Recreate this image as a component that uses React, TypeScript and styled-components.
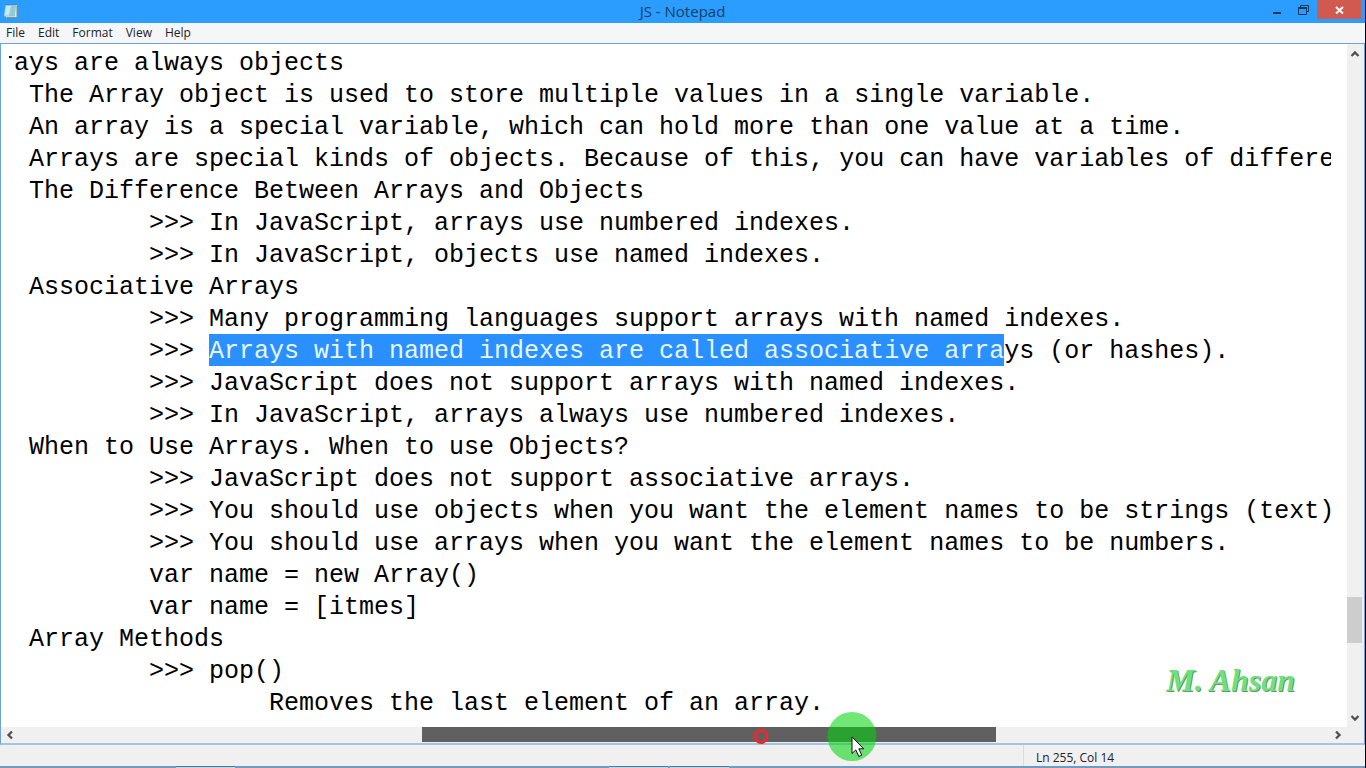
import React from "react";
import styled, { createGlobalStyle } from "styled-components";

const UI_FONT = '"Open Sans", "Noto Sans", sans-serif';

const GlobalStyle = createGlobalStyle`
  * { box-sizing: border-box; }
  body { margin: 0; background: #000; font-family: ${UI_FONT}; }
`;

const Window = styled.div`
  position: relative;
  display: grid;
  grid-template-rows: 23px 20px minmax(0, 1fr) 21px 2px;
  height: 100vh;
  margin-right: 1px;
  background: #f0f0f0;
  overflow: hidden;
`;

const TitleBar = styled.header`
  display: grid;
  grid-template-columns: 1fr auto 1fr;
  align-items: start;
  background: #2a9dff;
`;

const AppIcon = styled.svg`
  display: block;
  margin: 3px 0 0 3px;
`;

const Title = styled.h1`
  margin: 0;
  font-size: 15px;
  font-weight: 400;
  line-height: 23px;
  color: #143d66;
`;

const WindowButtons = styled.div`
  display: flex;
  justify-content: flex-end;
  padding-right: 4px;
`;

const WindowButton = styled.button<{ $close?: boolean }>`
  display: flex;
  align-items: center;
  justify-content: center;
  width: ${(p) => (p.$close ? 44 : 26)}px;
  height: 19px;
  padding: 0;
  border: 0;
  background: ${(p) => (p.$close ? "#d05a50" : "transparent")};
`;

const MenuBar = styled.nav`
  display: flex;
  gap: 1px;
  background: #f5f6f8;
`;

const MenuItem = styled.button`
  padding: 0 6px;
  border: 0;
  background: transparent;
  font-family: ${UI_FONT};
  font-size: 12px;
  line-height: 20px;
  color: #222;
`;

const Client = styled.main`
  display: grid;
  grid-template-columns: minmax(0, 1fr) 15px;
  grid-template-rows: minmax(0, 1fr) 15px;
  padding: 0 2px 1px 0;
  border: 1px solid #6ea3da;
  border-bottom: 2px solid #a5c3e4;
  background: #f0f0f0;
`;

const Page = styled.div`
  padding: 2px 16px 0 8px;
  background: #fff;
  overflow: hidden;
`;

const Viewport = styled.div`
  height: 100%;
  overflow: hidden;
`;

const Editor = styled.div`
  margin-left: -10px;
  outline: none;
  font-family: "Liberation Mono", monospace;
  font-size: 25px;
  line-height: 36px;
  white-space: pre;
  color: #000;
`;

const Line = styled.div<{ $level: number }>`
  height: 32px;
  padding-left: ${(p) => (p.$level === 0 ? 0 : p.$level * 120 - 90)}px;
`;

const Selection = styled.mark`
  display: inline-block;
  height: 32px;
  vertical-align: top;
  background: #2a90ff;
  color: #e8f6ff;
`;

const ScrollBar = styled.div<{ $vertical?: boolean }>`
  display: flex;
  flex-direction: ${(p) => (p.$vertical ? "column" : "row")};
  background: #f0f0f0;
`;

const ScrollButton = styled.button`
  display: flex;
  flex: none;
  align-items: center;
  justify-content: center;
  width: 18px;
  height: 15px;
  padding: 0;
  border: 0;
  background: transparent;
`;

const VerticalButton = styled(ScrollButton)`
  width: 15px;
  height: 19px;
`;

const Track = styled.div<{ $before: number; $thumb: number; $after: number; $vertical?: boolean }>`
  display: grid;
  flex: 1;
  ${(p) => (p.$vertical ? "grid-template-rows" : "grid-template-columns")}:
    ${(p) => `${p.$before}fr ${p.$thumb}fr ${p.$after}fr`};
`;

const Thumb = styled.div<{ $vertical?: boolean }>`
  ${(p) => (p.$vertical ? "grid-row: 2" : "grid-column: 2")};
  background: ${(p) => (p.$vertical ? "#cdcdcd" : "#606060")};
`;

const StatusBar = styled.footer`
  display: grid;
  grid-template-columns: minmax(0, 1fr) 342px;
  background: #f0f0f0;
`;

const StatusCell = styled.div`
  grid-column: 2;
  padding: 1px 0 0 12px;
  border-left: 1px solid #dcdcdc;
  font-size: 12px;
  line-height: 23px;
  color: #222;
`;

const TaskbarEdge = styled.div`
  display: grid;
  grid-template-columns: 176fr 59fr 374fr 59fr 2fr 59fr 636fr;
  background: #739bc2;
`;

const TaskButtonEdge = styled.div<{ $column: number }>`
  grid-column: ${(p) => p.$column};
  border-top: 1px solid #54789c;
  background: #bdd3e6;
`;

const Signature = styled.div`
  position: absolute;
  right: 70px;
  bottom: 72px;
  font-family: "Liberation Serif", serif;
  font-size: 32px;
  font-style: italic;
  font-weight: 700;
  line-height: 32px;
  color: #6ee07c;
  text-shadow: 1px 1px 0 #5f9a68;
`;

const ClickMarks = styled.svg`
  position: absolute;
  left: 750px;
  bottom: 4px;
  pointer-events: none;
`;

type Direction = "up" | "down" | "left" | "right";

const chevrons: Record<Direction, string> = {
  up: "M1.5 7 5 3.5 8.5 7",
  down: "M1.5 3 5 6.5 8.5 3",
  left: "M7 1.5 3.5 5 7 8.5",
  right: "M3 1.5 6.5 5 3 8.5",
};

const Chevron = ({ to }: { to: Direction }) => (
  <svg width="10" height="10" viewBox="0 0 10 10" aria-hidden="true">
    <path d={chevrons[to]} fill="none" stroke="#505050" strokeWidth="2.3" />
  </svg>
);

type TextLine = [level: number, text: string, selected?: string, rest?: string];

const lines: TextLine[] = [
  [0, "rays are always objects"],
  [1, "The Array object is used to store multiple values in a single variable."],
  [1, "An array is a special variable, which can hold more than one value at a time."],
  [1, "Arrays are special kinds of objects. Because of this, you can have variables of differe"],
  [1, "The Difference Between Arrays and Objects"],
  [2, ">>> In JavaScript, arrays use numbered indexes."],
  [2, ">>> In JavaScript, objects use named indexes."],
  [1, "Associative Arrays"],
  [2, ">>> Many programming languages support arrays with named indexes."],
  [2, ">>> ", "Arrays with named indexes are called associative arra", "ys (or hashes)."],
  [2, ">>> JavaScript does not support arrays with named indexes."],
  [2, ">>> In JavaScript, arrays always use numbered indexes."],
  [1, "When to Use Arrays. When to use Objects?"],
  [2, ">>> JavaScript does not support associative arrays."],
  [2, ">>> You should use objects when you want the element names to be strings (text)"],
  [2, ">>> You should use arrays when you want the element names to be numbers."],
  [2, "var name = new Array()"],
  [2, "var name = [itmes]"],
  [1, "Array Methods"],
  [2, ">>> pop()"],
  [3, "Removes the last element of an array."],
];

export default function App() {
  return (
    <>
      <GlobalStyle />
      <Window>
        <TitleBar>
          <AppIcon width="16" height="16" viewBox="0 0 16 16" aria-hidden="true">
            <path d="M3 2h11v13H3z" fill="#e9eee0" />
            <path d="M14 2.5v12H3.5" fill="none" stroke="#8f9078" />
            <path d="M2.5 2H13l-1 11.5H.8z" fill="#8fcbd8" />
            <path d="M3 3h5L6 12.5H1.5z" fill="#c4e9ef" />
            <path d="M2.5 1.5H14" stroke="#55758c" strokeDasharray="1 1" />
          </AppIcon>
          <Title>JS - Notepad</Title>
          <WindowButtons>
            <WindowButton aria-label="Minimize">
              <svg width="12" height="12" viewBox="0 0 12 12">
                <path d="M1 9h8" stroke="#173a5c" strokeWidth="2" />
              </svg>
            </WindowButton>
            <WindowButton aria-label="Restore">
              <svg width="12" height="12" viewBox="0 0 12 12">
                <path d="M2.5 3V1.5h8v6H9" fill="none" stroke="#173a5c" />
                <path d="M.5 4h8v6.5h-8z" fill="none" stroke="#173a5c" />
                <path d="M0 4h9" stroke="#173a5c" strokeWidth="2" />
              </svg>
            </WindowButton>
            <WindowButton $close aria-label="Close">
              <svg width="10" height="10" viewBox="0 0 10 10">
                <path d="m2 2 7 6.5m0-6.5-7 6.5" stroke="#fff" strokeWidth="2" />
              </svg>
            </WindowButton>
          </WindowButtons>
        </TitleBar>

        <MenuBar>
          {["File", "Edit", "Format", "View", "Help"].map((name) => (
            <MenuItem key={name}>{name}</MenuItem>
          ))}
        </MenuBar>

        <Client>
          <Page>
            <Viewport>
              <Editor
                role="textbox"
                aria-multiline="true"
                aria-label="Document text"
                contentEditable
                suppressContentEditableWarning
                spellCheck={false}
              >
                {lines.map(([level, text, selected, rest], index) => (
                  <Line key={index} $level={level}>
                    {text}
                    {selected && <Selection>{selected}</Selection>}
                    {rest}
                  </Line>
                ))}
              </Editor>
            </Viewport>
          </Page>
          <ScrollBar $vertical>
            <VerticalButton aria-label="Scroll up"><Chevron to="up" /></VerticalButton>
            <Track $vertical $before={534} $thumb={46} $after={65}>
              <Thumb $vertical />
            </Track>
            <VerticalButton aria-label="Scroll down"><Chevron to="down" /></VerticalButton>
          </ScrollBar>
          <ScrollBar>
            <ScrollButton aria-label="Scroll left"><Chevron to="left" /></ScrollButton>
            <Track $before={403} $thumb={574} $after={333}>
              <Thumb />
            </Track>
            <ScrollButton aria-label="Scroll right"><Chevron to="right" /></ScrollButton>
          </ScrollBar>
        </Client>

        <StatusBar>
          <StatusCell>Ln 255, Col 14</StatusCell>
        </StatusBar>
        <TaskbarEdge>
          <TaskButtonEdge $column={2} />
          <TaskButtonEdge $column={4} />
          <TaskButtonEdge $column={6} />
        </TaskbarEdge>

        <Signature>M. Ahsan</Signature>
        <ClickMarks width="132" height="54" viewBox="0 0 132 54" aria-hidden="true">
          <circle cx="11" cy="26.5" r="6" fill="none" stroke="#ea2a30" strokeWidth="3" />
          <circle cx="102" cy="26.5" r="24.5" fill="#00d40c" fillOpacity="0.56" />
          <path
            d="M102 27v16.5l3.8-3.6 3 6.6 3-1.4-3-6.3h5z"
            fill="#fff"
            stroke="#111"
          />
        </ClickMarks>
      </Window>
    </>
  );
}
